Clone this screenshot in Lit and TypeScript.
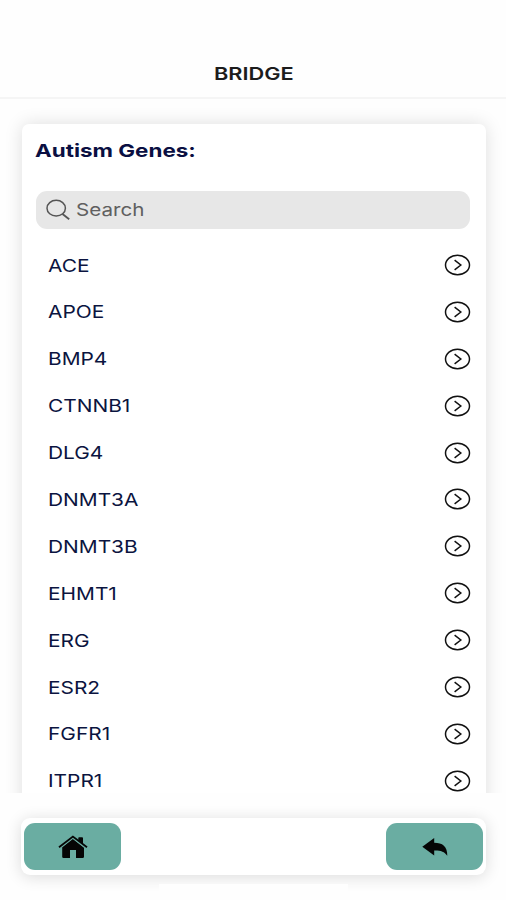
import { LitElement, html, css } from "lit";
import { customElement } from "lit/decorators.js";

const GENES = ["ACE", "APOE", "BMP4", "CTNNB1", "DLG4", "DNMT3A", "DNMT3B", "EHMT1", "ERG", "ESR2", "FGFR1", "ITPR1"];

@customElement("gene-row")
class GeneRow extends LitElement {
  static properties = { name: { type: String } };
  declare name: string;
  static styles = css`
    :host { display: flex; height: 46.9px; align-items: center; justify-content: space-between; padding: 0 15px 0 26px; }
    .name { padding-top: 1px; font-size: 17.4px; font-weight: 380; line-height: 24px; color: #0b1440; transform: scaleX(1.2); transform-origin: left; white-space: nowrap; }
    svg { display: block; }
  `;
  render() {
    return html`<span class="name">${this.name}</span>
      <svg width="27" height="22" viewBox="0 0 27 22" fill="none" stroke="#111">
        <ellipse cx="13.5" cy="11" rx="12" ry="9.8" stroke-width="1.5" />
        <path d="M10.6 6.2 L16.8 11 L10.6 15.8" stroke-width="1.5" />
      </svg>`;
  }
}

@customElement("app-root")
class AppRoot extends LitElement {
  static styles = css`
    :host { display: flex; flex-direction: column; height: 900px; background: #fefefe; font-family: Inter, "Liberation Sans", sans-serif; overflow: hidden; }
    header { box-sizing: border-box; height: 99px; padding: 62px 0 0 1px; border-bottom: 2px solid #f5f5f5; text-align: center; flex: none; }
    .title { display: inline-block; font-size: 17.4px; font-weight: 600; line-height: 24px; color: #1c1c1c; transform: scaleX(1.25); }
    .content { height: 694px; flex: none; overflow: hidden; box-sizing: border-box; padding: 25px 20px 0 22px; }
    .card { height: 720px; background: #fff; border-radius: 7px; box-shadow: 0 0 18px rgba(0, 0, 0, 0.13); }
    h1 { margin: 0; padding: 15px 0 0 13px; font-size: 18px; line-height: 24px; font-weight: 650; color: #0a0f42; white-space: nowrap; transform: scaleX(1.245); transform-origin: 13px 0; }
    .search { display: flex; align-items: center; box-sizing: border-box; height: 38px; margin: 28px 16px 0 14px; padding-left: 9.5px; border-radius: 11px; background: #e7e7e7; }
    .hint { margin-left: 6.5px; font-size: 17.4px; line-height: 24px; color: #606060; transform: scaleX(1.185); transform-origin: left; }
    .list { padding-top: 12.6px; }
    .bar { display: flex; justify-content: space-between; box-sizing: border-box; flex: none; height: 57px; margin: 25px 20px 0 21px; padding: 5px 3px; border-radius: 9px; background: #fff; box-shadow: 0 2px 16px rgba(0, 0, 0, 0.14); }
    .btn { display: flex; align-items: center; justify-content: center; box-sizing: border-box; width: 97px; height: 47px; padding: 0; border: 0; border-radius: 11px; background: #6aada2; }
    .home { position: relative; width: 189px; height: 8px; flex: none; margin: 9px auto 0; background: #fefefe; }
  `;
  render() {
    return html`
      <header><span class="title">BRIDGE</span></header>
      <div class="content">
        <section class="card">
          <h1>Autism Genes:</h1>
          <div class="search">
            <svg width="24" height="22" viewBox="0 0 24 22" fill="none" stroke="#555" stroke-width="1.5">
              <ellipse cx="10.2" cy="9.2" rx="9.2" ry="7.9" />
              <path d="M16.5 15 L23.2 20.3" stroke-width="1.8" />
            </svg>
            <span class="hint">Search</span>
          </div>
          <div class="list">${GENES.map((g) => html`<gene-row .name=${g}></gene-row>`)}</div>
        </section>
      </div>
      <nav class="bar">
        <button class="btn" aria-label="Home">
          <svg width="30" height="24" viewBox="0 0 30 24" fill="#050505">
            <path d="M14.7 3.8 L26 12.8 V21.8 Q26 23 24.6 23 H18 V15 H12 V23 H5.6 Q4.2 23 4.2 21.8 V12.3 Z" />
            <path d="M1.2 12.6 L14.9 2 L28.7 12.6" fill="none" stroke="#6aada2" stroke-width="3.2" />
            <path d="M1 12.3 L14.9 1.6 L29 12.3" fill="none" stroke="#050505" stroke-width="1.8" />
            <path d="M20.3 3 Q20.3 2.2 21.2 2.2 H24 Q25 2.2 25 3 V8.9 L20.3 5.4 Z" />
          </svg>
        </button>
        <button class="btn" aria-label="Back">
          <svg width="26" height="20" viewBox="0 0 26 20" fill="#050505">
            <path d="M0.3 9.7 L12.2 0.9 V5.8 C20.5 5.8 25.4 9.3 25.3 18.7 C22.2 14.3 18.4 13.2 12.2 13.4 V18.5 Z" />
          </svg>
        </button>
      </nav>
      <div class="home"></div>
    `;
  }
}
